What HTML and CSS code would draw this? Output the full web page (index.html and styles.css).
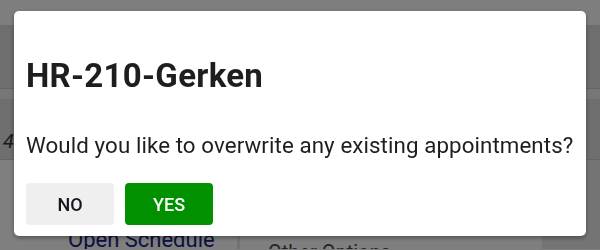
FILE: index.html
```html
<!DOCTYPE html>
<html lang="en">
<head>
    <meta charset="UTF-8">
    <meta name="viewport" content="width=device-width, initial-scale=1.0">
    <title>Overwrite Appointments</title>
    <link rel="stylesheet" href="styles.css">
</head>
<body>
    <div class="app">
        <div class="topbar"></div>
        <div class="row row-first"></div>
        <div class="row-gap"></div>
        <div class="row"><span class="row-num">4</span></div>
        <div class="footer">
            <div class="col col-left"><a class="link" href="#">Open Schedule</a></div>
            <div class="col col-mid"><span class="muted">Other Options</span></div>
            <div class="col col-right"></div>
        </div>
    </div>

    <div class="backdrop">
        <div class="dialog">
            <h2 class="dialog-title">HR-210-Gerken</h2>
            <p class="dialog-text">Would you like to overwrite any existing appointments?</p>
            <div class="dialog-actions">
                <button class="btn btn-no">NO</button>
                <button class="btn btn-yes">YES</button>
            </div>
        </div>
    </div>
</body>
</html>
```

FILE: styles.css
```css
body {
    margin: 0;
    font-family: Roboto, "Liberation Sans", sans-serif;
    background-color: #ffffff;
    overflow: hidden;
}
.app {
    width: 600px;
    height: 250px;
    display: flex;
    flex-direction: column;
    overflow: hidden;
}
.app > div {
    flex-shrink: 0;
}
.topbar {
    height: 25px;
    background: #fdfdfd;
}
.row {
    height: 60px;
    background: #dcdcdc;
    display: flex;
    align-items: center;
    border-bottom: 1px solid #c8c8c8;
}
.row-first {
    height: 63px;
}
.row-gap {
    height: 10px;
    background: #efefef;
}
.row-num {
    margin-left: 3px;
    margin-top: 24px;
    font-style: italic;
    font-size: 20px;
    color: #333;
}
.footer {
    height: 89px;
    display: flex;
    overflow: hidden;
}
.col {
    background: #ffffff;
    overflow: hidden;
}
.col-left {
    width: 240px;
    box-sizing: border-box;
    padding-top: 67px;
    padding-left: 68px;
    border-right: 3px solid #e6e6e6;
}
.col-mid {
    width: 302px;
    box-sizing: border-box;
    padding-top: 80px;
    padding-left: 28px;
}
.col-right {
    flex: 1;
    background: #e8e8e8;
}
.link {
    color: #1a237e;
    font-size: 22px;
    text-decoration: none;
    white-space: nowrap;
}
.muted {
    color: #444;
    font-size: 20px;
    white-space: nowrap;
}
.backdrop {
    position: fixed;
    inset: 0;
    background: rgba(0, 0, 0, 0.5);
    padding: 11px 14px 14px;
}
.dialog {
    background: white;
    border-radius: 5px;
    box-shadow: 0px 2px 4px rgba(0, 0, 0, 0.35);
    padding: 12px;
    height: 201px;
}
.dialog-title {
    margin: 33px 0 0 0;
    font-size: 33px;
    font-weight: 700;
    letter-spacing: 0.3px;
    color: #1e1e1e;
}
.dialog-text {
    margin: 37px 0 0 0;
    font-size: 22.3px;
    letter-spacing: 0.1px;
    color: #1e1e1e;
    white-space: nowrap;
}
.dialog-actions {
    margin-top: 25px;
    display: flex;
    gap: 11px;
}
.btn {
    width: 88px;
    height: 42px;
    border: none;
    border-radius: 4px;
    font-family: Roboto, "Liberation Sans", sans-serif;
    font-size: 18px;
    font-weight: 500;
    cursor: pointer;
}
.btn-no {
    background-color: #efefef;
    color: #15151f;
}
.btn-yes {
    background-color: #009000;
    color: white;
}
```
